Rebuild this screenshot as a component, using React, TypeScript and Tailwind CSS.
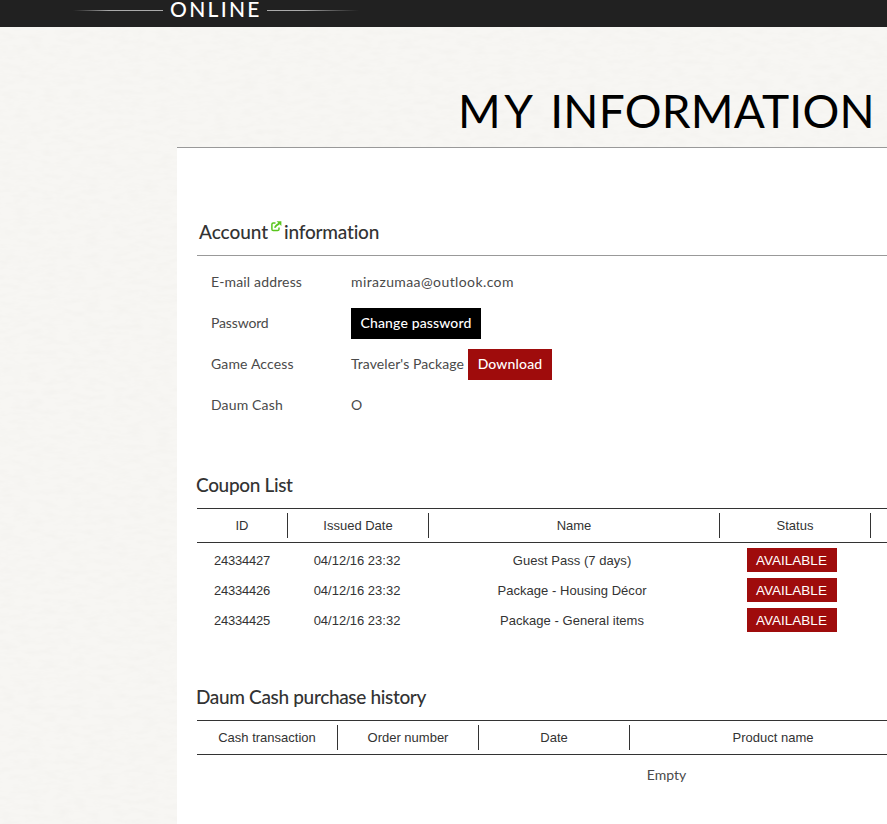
import type { ReactNode } from "react";

const coupons = [
  { id: "24334427", date: "04/12/16 23:32", name: "Guest Pass (7 days)" },
  { id: "24334426", date: "04/12/16 23:32", name: "Package - Housing Décor" },
  { id: "24334425", date: "04/12/16 23:32", name: "Package - General items" },
];

function PaperTexture() {
  return (
    <svg className="pointer-events-none absolute inset-0 h-full w-full" aria-hidden="true">
      <filter id="paper" x="0" y="0" width="100%" height="100%">
        <feTurbulence type="fractalNoise" baseFrequency="0.07 0.2" numOctaves="3" seed="4" />
        <feColorMatrix values="0 0 0 0 0.45  0 0 0 0 0.43  0 0 0 0 0.38  0.09 0 0 0 -0.035" />
      </filter>
      <rect width="100%" height="100%" filter="url(#paper)" />
    </svg>
  );
}

function HeadCell({ width, children, last = false }: { width: string; children?: ReactNode; last?: boolean }) {
  return (
    <div className={`h-[25px] shrink-0 text-center leading-[25px] ${width} ${last ? "" : "border-r border-[#333]"}`}>
      {children}
    </div>
  );
}

function HeadRow({ children }: { children: ReactNode }) {
  return (
    <div className="flex h-[35px] items-start border-y border-[#333] pt-1 font-['Liberation_Sans',Arial,sans-serif] text-[13px] text-[#333]">
      {children}
    </div>
  );
}

function SectionTitle({ children }: { children: ReactNode }) {
  return (
    <h2 className="-ml-px h-[36px] whitespace-nowrap text-[19px] font-medium leading-[26px] tracking-[-0.34px]">{children}</h2>
  );
}

function InfoRow({ label, children }: { label: ReactNode; children: ReactNode }) {
  return (
    <div className="flex h-[41px] items-center">
      <div className="w-[140px] shrink-0 whitespace-nowrap pb-[2px] tracking-[0.15px]">{label}</div>
      <div className="flex items-center whitespace-nowrap">{children}</div>
    </div>
  );
}

export default function App() {
  return (
    <div className="relative flex h-[824px] w-[887px] flex-col overflow-hidden bg-[#f7f6f3] font-[Lato,sans-serif] text-[#333]">
      <PaperTexture />
      <header className="relative flex h-[27px] shrink-0 items-start bg-[#212121] pl-[73px]">
        <div className="mt-[10px] h-px w-[90px] bg-linear-to-r from-[#212121] to-[#aaa] to-40%" />
        <div className="ml-[7px] w-[97px] whitespace-nowrap text-[21px] font-medium leading-[18px] tracking-[2.3px] text-white">ONLINE</div>
        <div className="mt-[10px] h-px w-[92px] bg-linear-to-l from-[#212121] to-[#aaa] to-60%" />
      </header>

      <div className="relative flex h-[120px] shrink-0 items-start pl-[458px] pt-[56px]">
        <h1 className="whitespace-nowrap text-[46px] font-normal leading-[56px] tracking-[0.25px] text-black">
          <span className="tracking-[3.6px]">MY </span>INFORMATION
        </h1>
      </div>

      <main className="relative ml-[177px] flex h-[677px] w-[710px] shrink-0 flex-col border-t border-[#999] bg-white pl-5">
        <section className="mt-[71px] h-[253px] shrink-0">
          <h2 className="flex h-[26px] items-center pl-0.5 text-[19px] font-medium leading-[26px]">
            <span className="whitespace-nowrap tracking-[-0.05px]">Account</span>
            <svg className="mb-[12px] ml-[3px] mr-[2px] h-[11px] w-[11px]" viewBox="0 0 11 11" fill="none" stroke="#5ac61e">
              <path d="M4.5 2H2.2Q.9 2 .9 3.3V8.2Q.9 9.6 2.2 9.6H6.6Q8 9.6 8 8.2V6.4" strokeWidth="1.5" />
              <path d="M4 6.7Q4.1 4.9 8.2 2.6" strokeWidth="1.8" />
              <path d="M5.6 .2H10.4V5Z" fill="#5ac61e" stroke="none" />
            </svg>
            <span className="whitespace-nowrap tracking-[-0.2px]">information</span>
          </h2>
          <div className="mt-[10px] h-px bg-[#999]" />
          <div className="pl-[14px] pt-[6px] text-[14px] text-[#4a4a4a]">
            <InfoRow label="E-mail address">
              <span className="pb-[2px] tracking-[0.4px]">mirazumaa@outlook.com</span>
            </InfoRow>
            <InfoRow label={<span className="tracking-[-0.15px]">Password</span>}>
              <button className="h-[31px] w-[130px] bg-black pb-[2px] text-[14px] font-medium tracking-[0.15px] text-white">
                Change password
              </button>
            </InfoRow>
            <InfoRow label="Game Access">
              <span className="w-[117px] pb-[2px] tracking-[0.08px]">Traveler&apos;s Package</span>
              <button className="h-[31px] w-[84px] bg-[#9f0c0c] pb-[2px] text-[14px] font-medium tracking-[0.15px] text-white">
                Download
              </button>
            </InfoRow>
            <InfoRow label="Daum Cash">
              <span className="pb-[2px]">O</span>
            </InfoRow>
          </div>
        </section>

        <section className="h-[212px] shrink-0">
          <SectionTitle>Coupon List</SectionTitle>
          <HeadRow>
            <HeadCell width="w-[91px]">ID</HeadCell>
            <HeadCell width="w-[141px]">Issued Date</HeadCell>
            <HeadCell width="w-[291px]">Name</HeadCell>
            <HeadCell width="w-[151px]">Status</HeadCell>
          </HeadRow>
          <div className="pt-[2px] font-['Liberation_Sans',Arial,sans-serif] text-[13px]">
            {coupons.map((coupon) => (
              <div key={coupon.id} className="flex h-[30px] items-center text-center">
                <div className="w-[90px] pt-px tracking-[-0.2px]">{coupon.id}</div>
                <div className="w-[140px] pt-px">{coupon.date}</div>
                <div className="w-[290px] pt-px tracking-[0.04px]">{coupon.name}</div>
                <div className="flex w-[150px] justify-center">
                  <button className="h-6 w-[90px] bg-[#9f0c0c] pr-px pt-[2px] text-[13.5px] font-normal text-white">
                    AVAILABLE
                  </button>
                </div>
              </div>
            ))}
          </div>
        </section>

        <section className="shrink-0">
          <SectionTitle>Daum Cash purchase history</SectionTitle>
          <HeadRow>
            <HeadCell width="w-[141px]">Cash transaction</HeadCell>
            <HeadCell width="w-[141px]">Order number</HeadCell>
            <HeadCell width="w-[151px]">Date</HeadCell>
            <HeadCell width="w-[286px]" last>Product name</HeadCell>
          </HeadRow>
          <div className="w-[939px] pt-[10px] text-center text-[14px] leading-5 text-[#4a4a4a]">Empty</div>
        </section>
      </main>
    </div>
  );
}
